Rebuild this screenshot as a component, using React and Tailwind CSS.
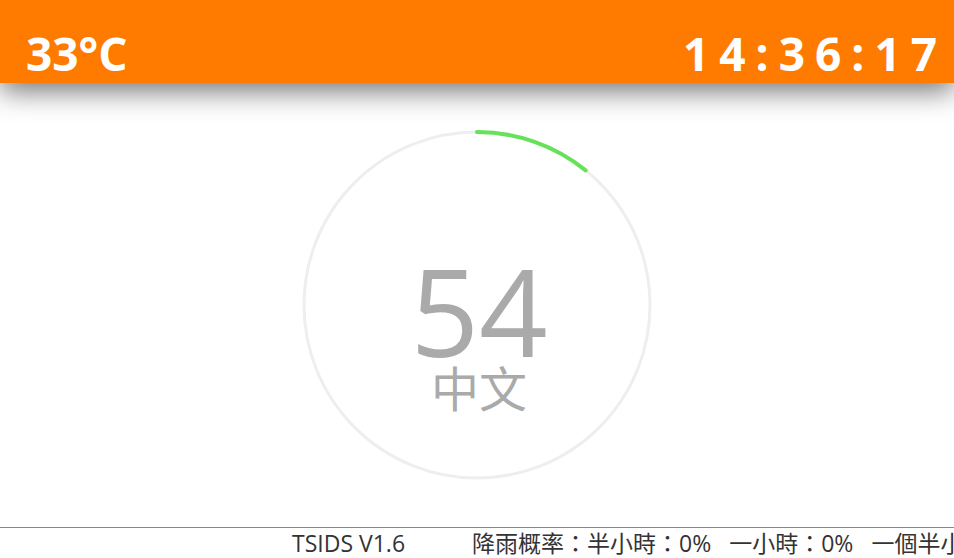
import React from "react";

const R = 173;
const C = 2 * Math.PI * R;
const progress = 0.108;

const rain = ["半小時：0%", "一小時：0%", "一個半小時：0%", "兩小時：0%"];

export default function App() {
    return (
        <div className="w-[954px] h-[558px] bg-white overflow-hidden flex flex-col font-['Open_Sans','Noto_Sans_CJK_TC',sans-serif]">
            {/* Header */}
            <header className="relative z-10 h-[83px] shrink-0 bg-[#ff7b00] flex items-end justify-between pl-[26px] pr-[7px] shadow-[0_8px_28px_rgba(0,0,0,0.55)]">
                <span className="text-white font-bold text-[46px] leading-[60px]">33°C</span>
                <span className="text-white font-bold text-[46px] leading-[60px] tracking-[10px]">14:36:17</span>
            </header>

            {/* Gauge */}
            <main className="flex-1 flex items-center justify-center">
                <div className="relative w-[352px] h-[352px]">
                    <svg width="352" height="352" viewBox="0 0 352 352" className="absolute inset-0">
                        <circle cx="176" cy="176" r={R} fill="none" stroke="#eeeeee" strokeWidth="3" />
                        <circle
                            cx="176"
                            cy="176"
                            r={R}
                            fill="none"
                            stroke="#66e25a"
                            strokeWidth="4"
                            strokeLinecap="round"
                            strokeDasharray={`${C * progress} ${C}`}
                            transform="rotate(-90 176 176)"
                        />
                    </svg>
                    <div className="absolute inset-0 flex flex-col items-center justify-center pt-[62px] pl-[4px]">
                        <span className="text-[#aaaaaa] font-normal text-[120px] leading-[110px]">54</span>
                        <span className="text-[#aaaaaa] text-[48px] leading-[54px] -mt-[4px]">中文</span>
                    </div>
                </div>
            </main>

            {/* Footer ticker */}
            <footer className="h-[31px] shrink-0 border-t border-[#888888] overflow-hidden whitespace-nowrap pl-[292px] text-[23px] leading-[30px] text-[#333333]">
                <span>TSIDS V1.6</span>
                <span className="ml-[67px]">降雨概率：</span>
                {rain.map((r, i) => (
                    <span key={i} className={i === 0 ? "" : "ml-[18px]"}>{r}</span>
                ))}
            </footer>
        </div>
    );
}
